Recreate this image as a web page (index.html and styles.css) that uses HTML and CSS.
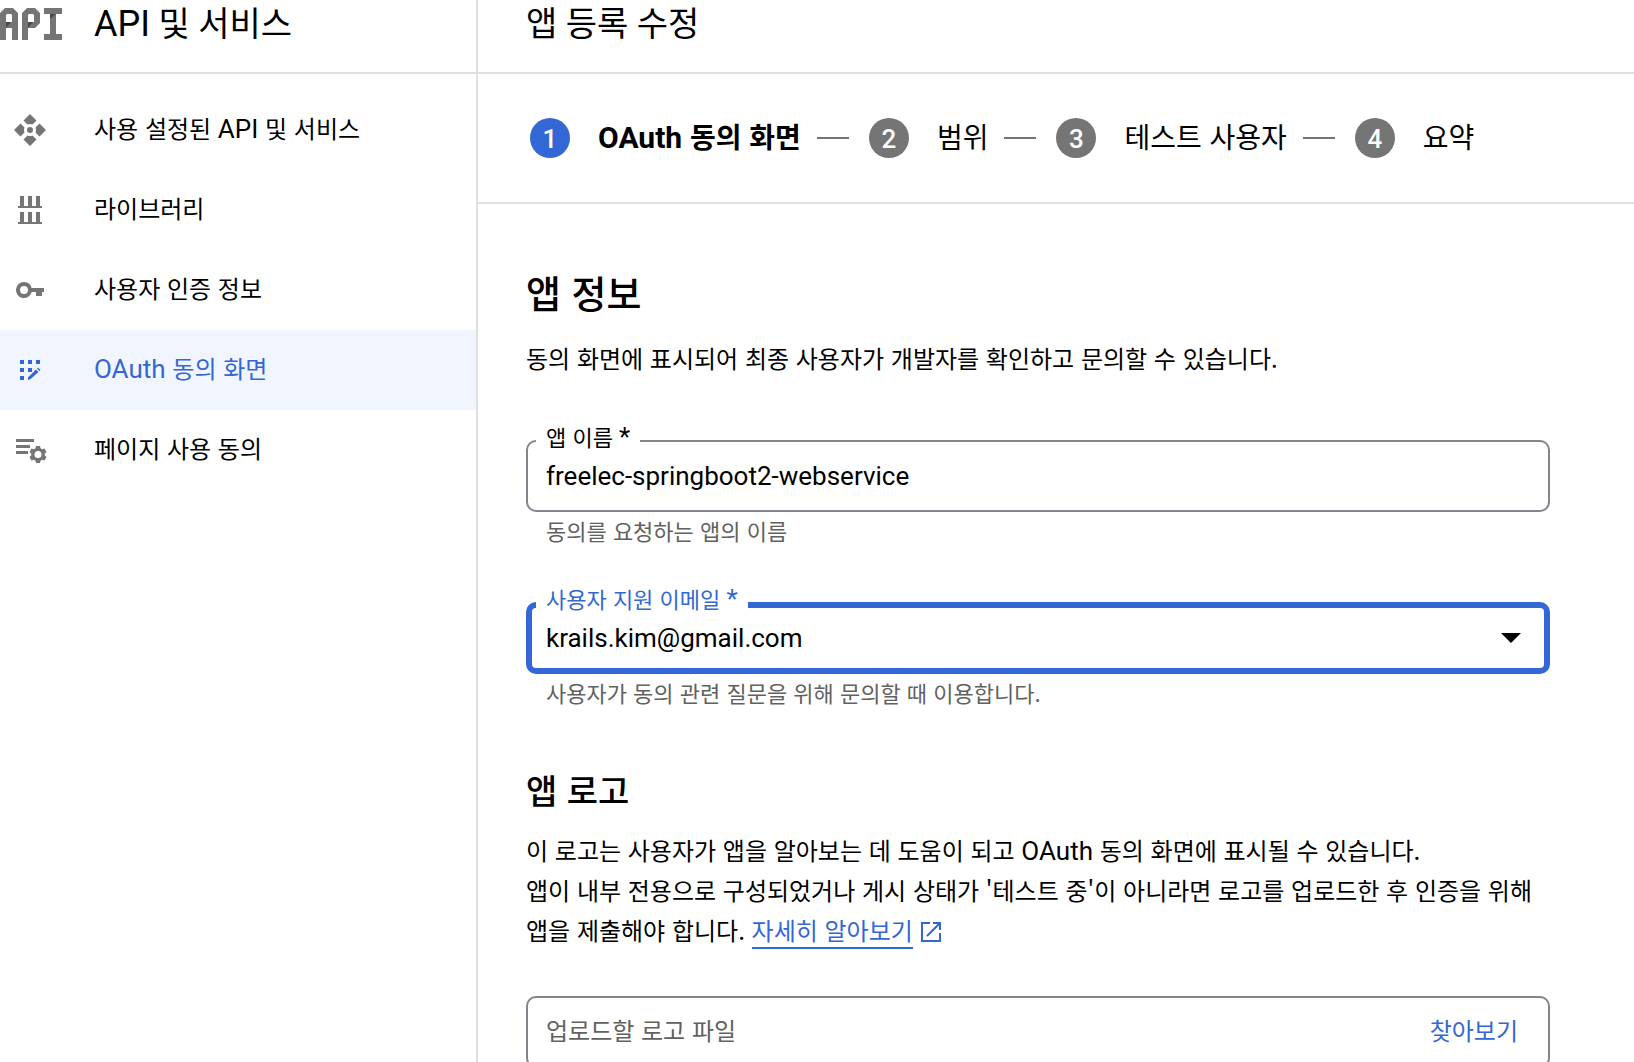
FILE: index.html
```html
<!DOCTYPE html>
<html lang="ko">
<head>
<meta charset="utf-8">
<meta name="viewport" content="width=device-width, initial-scale=1">
<title>앱 등록 수정</title>
<link rel="stylesheet" href="styles.css">
</head>
<body>
<div class="app">
  <aside class="sidebar">
    <div class="bar product">
      <svg class="logo" viewBox="0 0 64 36" aria-hidden="true">
        <path fill-rule="evenodd" d="M0 34V7l5-5h8l5 5v27h-6V22H6v12zM6 16h6V9l-1-1H7L6 9z"/>
        <path fill-rule="evenodd" d="M22 34V7l5-5h8l5 5v10l-5 5h-7v12zM28 16h6V9l-1-1h-4l-1 1z"/>
        <path d="M44 2h18v6h-6v20h6v6H44v-6h6V8h-6z"/>
        <path class="fold" d="M6 16h5l-5 6zM28 16h5l-5 6zM50 8h6l-6 5z"/>
      </svg>
      <span class="title"><span class="latin">API</span> 및 서비스</span>
    </div>
    <nav class="nav">
      <a class="nav-item" href="#">
        <svg class="icon" viewBox="0 0 36 36" aria-hidden="true">
          <path id="petal" d="M18 2l6.500 6.500-4 4a6 6 0 0 0-5 0l-4-4z"/>
          <use href="#petal" transform="rotate(90 18 18)"/>
          <use href="#petal" transform="rotate(180 18 18)"/>
          <use href="#petal" transform="rotate(270 18 18)"/>
          <circle cx="18" cy="18" r="3"/>
        </svg>
        <span class="name">사용 설정된 <span class="latin">API</span> 및 서비스</span>
      </a>
      <a class="nav-item" href="#">
        <svg class="icon" viewBox="0 0 36 36" aria-hidden="true">
          <path d="M8 4h4v10h4V4h4v10h4V4h4v10h2v2H6v-2h2zM8 20h4v10h4V20h4v10h4V20h4v10h2v2H6v-2h2z"/>
        </svg>
        <span class="name">라이브러리</span>
      </a>
      <a class="nav-item" href="#">
        <svg class="icon" viewBox="0 0 36 36" aria-hidden="true">
          <path fill-rule="evenodd" d="M12 10a8 8 0 0 1 7.700 6H32v4h-2v4h-6v-4h-4.300A8 8 0 1 1 12 10zm0 4a4 4 0 1 0 0 8 4 4 0 0 0 0-8z"/>
        </svg>
        <span class="name">사용자 인증 정보</span>
      </a>
      <a class="nav-item active" href="#" aria-current="page">
        <svg class="icon" viewBox="0 0 36 36" aria-hidden="true">
          <path d="M8 8h4v4H8zM16 8h4v4h-4zM24 8h4v4h-4zM8 16h4v4H8zM16 16h4v4h-4zM8 24h4v4H8zM16 28v-2.500l8-8 2.500 2.500-8 7zM25 16.500l1-1 2.500 2.500-1 1z"/>
        </svg>
        <span class="name"><span class="latin">OAuth</span> 동의 화면</span>
      </a>
      <a class="nav-item" href="#">
        <svg class="icon" viewBox="0 0 36 36" aria-hidden="true">
          <path d="M4 7h18v3H4zM4 13h14v3H4zM4 19h12v3H4z"/>
          <path fill-rule="evenodd" d="M24 14h4l.5 2.300 1.800 1 2.200-.8 2 3.400-1.700 1.600v2l1.700 1.600-2 3.400-2.200-.8-1.800 1-.5 2.300h-4l-.5-2.300-1.800-1-2.200.8-2-3.400 1.700-1.600v-2l-1.700-1.600 2-3.400 2.200.8 1.800-1zM26 19a3.500 3.500 0 1 0 0 7 3.500 3.500 0 0 0 0-7z"/>
        </svg>
        <span class="name">페이지 사용 동의</span>
      </a>
    </nav>
  </aside>

  <main class="main">
    <header class="bar page-head"><h1 class="title">앱 등록 수정</h1></header>

    <ol class="stepper">
      <li class="step current" aria-current="step"><span class="num">1</span><span class="name"><span class="latin">OAuth</span> 동의 화면</span></li>
      <li class="step"><span class="num">2</span><span class="name">범위</span></li>
      <li class="step"><span class="num">3</span><span class="name">테스트 사용자</span></li>
      <li class="step"><span class="num">4</span><span class="name">요약</span></li>
    </ol>

    <form class="content">
      <h2>앱 정보</h2>
      <p class="text">동의 화면에 표시되어 최종 사용자가 개발자를 확인하고 문의할 수 있습니다.</p>

      <div class="field">
        <label for="app-name">앱 이름 <span class="latin">*</span></label>
        <input class="box" id="app-name" type="text" value="freelec-springboot2-webservice">
        <p class="hint">동의를 요청하는 앱의 이름</p>
      </div>

      <div class="field focused">
        <label for="support-email">사용자 지원 이메일 <span class="latin">*</span></label>
        <select class="box" id="support-email"><option>krails.kim@gmail.com</option></select>
        <svg class="arrow" viewBox="0 0 20 10" aria-hidden="true"><path d="M0 0h20L10 10z"/></svg>
        <p class="hint">사용자가 동의 관련 질문을 위해 문의할 때 이용합니다.</p>
      </div>

      <h3>앱 로고</h3>
      <p class="text">이 로고는 사용자가 앱을 알아보는 데 도움이 되고 <span class="latin">OAuth</span> 동의 화면에 표시될 수 있습니다.<br>앱이 내부 전용으로 구성되었거나 게시 상태가 '테스트 중'이 아니라면 로고를 업로드한 후 인증을 위해<br>앱을 제출해야 합니다. <a class="more" href="#">자세히 알아보기</a><svg class="external" viewBox="0 0 20 20" aria-hidden="true"><path d="M9 1H1v18h18v-8M12 1h7v7M19 1L6 14"/></svg></p>

      <div class="box upload">
        <span class="placeholder">업로드할 로고 파일</span>
        <button class="browse" type="button">찾아보기</button>
      </div>
    </form>
  </main>
</div>
</body>
</html>
```
FILE: styles.css
```css
* {
  box-sizing: border-box;
}

body {
  margin: 0;
  background: #fff;
  color: #000;
  font: 24px/40px "Noto Sans CJK KR", Roboto, sans-serif;
}

h1, h2, h3, p, ol {
  margin: 0;
  padding: 0;
}

/* Latin words are set slightly larger than the Hangul around them */
.latin {
  font-family: Roboto, sans-serif;
  font-size: 26px;
  line-height: 1;
}

.app {
  display: flex;
  height: 100vh;
  overflow: hidden;
}

.sidebar {
  flex: none;
  width: 478px;
  border-right: 2px solid #e0e0e0;
}

.main {
  flex: 1;
  min-width: 0;
}

/* Top bars */
.bar {
  display: flex;
  align-items: center;
  height: 74px;
  padding-bottom: 24px;
  border-bottom: 2px solid #e0e0e0;
}

.product {
  gap: 30px;
}

.page-head {
  padding-left: 48px;
}

.title {
  font-family: Roboto, "Noto Sans CJK KR", sans-serif;
  font-size: 34px;
  font-weight: 400;
  line-height: 48px;
}

.title .latin {
  font-size: 36px;
}

.logo {
  width: 64px;
  height: 36px;
  fill: #757575;
}

.logo .fold {
  fill: #494949;
}

/* Side navigation */
.nav {
  padding-top: 16px;
}

.nav-item {
  display: flex;
  align-items: center;
  gap: 46px;
  height: 80px;
  padding-left: 12px;
  color: #000;
  text-decoration: none;
}

.name {
  padding-bottom: 4px;
}

.icon {
  width: 36px;
  height: 36px;
  fill: #757575;
}

.nav-item.active {
  background: #f0f5ff;
  color: #3367d6;
}

.active .icon {
  fill: #3367d6;
}

/* Stepper */
.stepper {
  display: flex;
  align-items: center;
  height: 130px;
  padding-left: 52px;
  border-bottom: 2px solid #e0e0e0;
  list-style: none;
  font-size: 28px;
  white-space: nowrap;
}

.stepper .latin {
  font-size: 30px;
}

.step {
  display: flex;
  align-items: center;
}

.step:not(:last-child)::after {
  content: "";
  width: 32px;
  height: 2px;
  margin: 0 20px 0 16px;
  background: #757575;
}

.num {
  width: 40px;
  height: 40px;
  margin-right: 28px;
  border-radius: 50%;
  background: #757575;
  color: #fff;
  font: 500 26px/42px Roboto, sans-serif;
  text-align: center;
}

.current {
  font-weight: 700;
}

.current .num {
  background: #3367d6;
}

/* Form */
.content {
  max-width: 1120px;
  padding: 60px 48px 0;
}

h2, h3 {
  font-weight: 500;
  line-height: 56px;
}

h2 {
  margin-bottom: 18px;
  font-size: 38px;
}

h3 {
  margin: 50px 0 12px;
  font-size: 34px;
}

.text {
  white-space: nowrap;
}

.field {
  position: relative;
  margin-top: 62px;
}

.field + .field {
  margin-top: 52px;
}

.field label {
  position: absolute;
  top: -22px;
  left: 10px;
  padding: 0 10px;
  background: #fff;
  font-size: 22px;
  line-height: 36px;
}

.field .latin {
  font-size: 26px;
}

.box {
  display: block;
  width: 100%;
  height: 72px;
  padding: 0 18px;
  border: 2px solid #80868b;
  border-radius: 10px;
  background: #fff;
  color: #000;
  font: 26px/40px Roboto, "Noto Sans CJK KR", sans-serif;
  appearance: none;
  outline: none;
}

.focused label {
  color: #3367d6;
}

.focused .box {
  padding: 0 14px;
  border: 6px solid #3367d6;
}

.arrow {
  position: absolute;
  top: 31px;
  right: 29px;
  width: 20px;
  height: 10px;
  pointer-events: none;
}

.hint {
  padding: 0 20px 2px;
  color: #616161;
  font-size: 22px;
  line-height: 36px;
}

.more {
  display: inline-block;
  height: 39px;
  border-bottom: 2px solid #3367d6;
  color: #3367d6;
  text-decoration: none;
}

.external {
  width: 20px;
  height: 20px;
  margin-left: 8px;
  vertical-align: -2px;
  fill: none;
  stroke: #3367d6;
  stroke-width: 2;
}

.upload {
  display: flex;
  align-items: center;
  justify-content: space-between;
  margin-top: 46px;
  padding: 0 30px 4px 18px;
  font: inherit;
}

.placeholder {
  color: #616161;
}

.browse {
  padding: 0;
  border: 0;
  background: none;
  color: #3367d6;
  font: inherit;
}
```
